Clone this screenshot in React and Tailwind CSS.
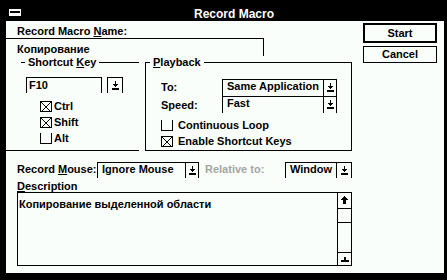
import React from "react";

const BG = "bg-[#fafefa]";

function ComboArrow() {
  return (
    <svg width="7" height="9" viewBox="0 0 7 9" shapeRendering="crispEdges">
      <rect x="3" y="0" width="1" height="3" fill="#000" />
      <rect x="1" y="3" width="5" height="1" fill="#000" />
      <rect x="2" y="4" width="3" height="1" fill="#000" />
      <rect x="3" y="5" width="1" height="1" fill="#000" />
      <rect x="0" y="7" width="7" height="2" fill="#000" />
    </svg>
  );
}

function UpArrow() {
  return (
    <svg width="7" height="8" viewBox="0 0 7 8" shapeRendering="crispEdges">
      <rect x="3" y="0" width="1" height="1" fill="#000" />
      <rect x="2" y="1" width="3" height="1" fill="#000" />
      <rect x="1" y="2" width="5" height="1" fill="#000" />
      <rect x="0" y="3" width="7" height="1" fill="#000" />
      <rect x="2" y="4" width="3" height="4" fill="#000" />
    </svg>
  );
}

function DownStub() {
  return (
    <svg width="8" height="5" viewBox="0 0 8 5" shapeRendering="crispEdges">
      <rect x="3" y="0" width="2" height="3" fill="#000" />
      <rect x="0" y="3" width="8" height="2" fill="#000" />
    </svg>
  );
}

function Check({ checked, openTop }) {
  return (
    <div
      className={
        "w-[12px] h-[11px] border-black border-l border-r border-b " +
        (openTop ? "" : "border-t ")
      }
    >
      {checked && (
        <svg width="10" height="10" viewBox="0 0 10 10" className="block">
          <line x1="0" y1="0" x2="10" y2="10" stroke="#000" strokeWidth="1" />
          <line x1="10" y1="0" x2="0" y2="10" stroke="#000" strokeWidth="1" />
        </svg>
      )}
    </div>
  );
}

function Combo({ text, w, btnW = 13, h = 17, bold }) {
  return (
    <div
      className={"flex border-black border-t border-l border-r " + BG}
      style={{ width: w, height: h }}
    >
      <div className={"flex-1 pl-[4px] whitespace-nowrap overflow-hidden " + (bold ? "font-extrabold" : "")}>
        {text}
      </div>
      <div
        className="border-l border-black flex justify-center pt-[3px]"
        style={{ width: btnW }}
      >
        <ComboArrow />
      </div>
    </div>
  );
}

function U({ children }) {
  return <span className="underline decoration-1 underline-offset-[1px]">{children}</span>;
}

export default function App() {
  return (
    <div className="w-[447px] h-[280px] bg-black flex flex-col overflow-hidden font-['Liberation_Sans',sans-serif] text-[11px] font-bold leading-[13px] text-black">
      {/* Title bar */}
      <div className="h-[21px] shrink-0 flex items-start">
        <div className="ml-[9px] mt-[9px] w-[12px] h-[7px] bg-white flex flex-col">
          <div className="mt-[2px] mx-[1px] h-[2px] bg-black" />
        </div>
        <div className="flex-1 text-center text-white text-[12px] pt-[8px]">Record Macro</div>
      </div>

      {/* Client */}
      <div className={"flex-1 ml-[6px] mr-[3px] mb-[7px] flex " + BG}>
        {/* Left column */}
        <div className="w-[346px] flex flex-col">
          <div className="pl-[11px] pt-[4px] h-[17px] whitespace-nowrap">
            Record Macro <U>N</U>ame:
          </div>
          <div className="w-[258px] h-[18px] border-t border-r border-black pl-[11px] pt-[4px]">
            Копирование
          </div>

          {/* Group boxes */}
          <div className="flex h-[95px]">
            {/* Shortcut Key */}
            <div className="w-[133px] flex flex-col border-b border-black">
              <div className="h-[13px] flex items-start">
                <div className="w-[15px]" />
                <div className="w-[4px] mt-[6px] border-t border-black" />
                <div className="px-[3px] whitespace-nowrap">
                  Shortcut <U>K</U>ey
                </div>
                <div className="flex-1 mt-[6px] border-t border-black" />
              </div>
              <div className="flex mt-[8px] ml-[20px]">
                <div className="w-[76px] h-[16px] border-t border-l border-r border-black pl-[2px] pt-[1px]">
                  F10
                </div>
                <div className="ml-[5px] w-[16px] h-[16px] border-t border-l border-r border-black flex justify-center pt-[3px]">
                  <ComboArrow />
                </div>
              </div>
              <div className="flex flex-col gap-[5px] mt-[8px] ml-[34px]">
                <div className="flex items-center gap-[2px] h-[11px]">
                  <Check checked />
                  <span>Ctrl</span>
                </div>
                <div className="flex items-center gap-[2px] h-[11px]">
                  <Check checked />
                  <span>Shift</span>
                </div>
                <div className="flex items-center gap-[2px] h-[11px]">
                  <Check openTop />
                  <span>Alt</span>
                </div>
              </div>
            </div>

            {/* Playback */}
            <div className="ml-[6px] w-[207px] flex flex-col">
              <div className="h-[13px] flex items-start">
                <div className="w-[5px] h-[7px] mt-[6px] border-t border-l border-black" />
                <div className="px-[3px] whitespace-nowrap">
                  <U>P</U>layback
                </div>
                <div className="flex-1 h-[7px] mt-[6px] border-t border-r border-black" />
              </div>
              <div className="flex-1 border-l border-r border-b border-black flex flex-col pl-[15px]">
                <div className="flex mt-[10px]">
                  <div className="w-[61px] pt-[2px]">To:</div>
                  <Combo text="Same Application" w={115} />
                </div>
                <div className="flex">
                  <div className="w-[61px] pt-[3px]">Speed:</div>
                  <Combo text="Fast" w={115} h={17} />
                </div>
                <div className="flex items-center gap-[5px] mt-[7px] h-[11px]">
                  <Check openTop />
                  <span>Continuous Loop</span>
                </div>
                <div className="flex items-center gap-[5px] mt-[5px] h-[11px]">
                  <Check checked />
                  <span>Enable Shortcut Keys</span>
                </div>
              </div>
            </div>
          </div>

          {/* Record Mouse row */}
          <div className="flex mt-[11px] h-[16px]">
            <div className="w-[91px] pl-[11px] pt-[1px] whitespace-nowrap">
              Record <U>M</U>ouse:
            </div>
            <Combo text="Ignore Mouse" w={102} h={16} />
            <div className="w-[86px] pl-[6px] pt-[1px] whitespace-nowrap text-[#a4a4a4]">
              Relative to:
            </div>
            <Combo text="Window" w={67} h={16} btnW={15} bold />
          </div>

          {/* Description */}
          <div className="mt-[2px] h-[12px] leading-[12px] pl-[11px]">
            <U>D</U>escription
          </div>
          <div className="ml-[11px] w-[335px] h-[74px] border border-black flex">
            <div className="flex-1 pl-[1px] pt-[5px] whitespace-nowrap overflow-hidden">
              Копирование выделенной области
            </div>
            <div className="w-[14px] border-l border-black flex flex-col">
              <div className="h-[16px] border-b border-black flex justify-center pt-[3px]">
                <UpArrow />
              </div>
              <div className="h-[14px] border-b border-black" />
              <div className="flex-1" />
              <div className="h-[13px] border-t border-black flex justify-center items-end pb-[3px]">
                <DownStub />
              </div>
            </div>
          </div>
        </div>

        {/* Right column: buttons */}
        <div className="ml-[11px] flex flex-col">
          <div className="mt-[2px] w-[74px] h-[20px] border-2 border-black flex items-center justify-center">
            Start
          </div>
          <div className="mt-[3px] w-[74px] h-[17px] border border-black flex items-center justify-center">
            Cancel
          </div>
        </div>
      </div>
    </div>
  );
}
